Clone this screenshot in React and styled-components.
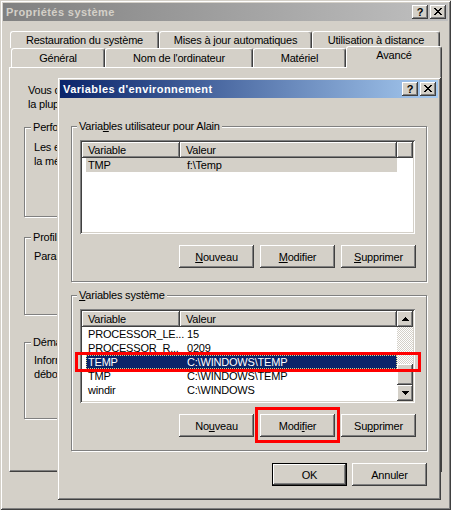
import React from 'react'
import styled, { createGlobalStyle, css } from 'styled-components'

const GlobalStyle = createGlobalStyle`
  html, body {
    margin: 0;
    padding: 0;
    background: #d4d0c8;
  }
  body {
    font-family: "Liberation Sans", Arial, sans-serif;
    font-size: 11px;
    letter-spacing: -0.2px;
    color: #000;
  }
`

const raised = css`
  box-shadow: inset -1px -1px #404040, inset 1px 1px #fff, inset -2px -2px #808080, inset 2px 2px #d4d0c8;
`

const frame = css`
  box-sizing: border-box;
  padding: 3px;
  background: #d4d0c8;
  box-shadow: inset 1px 1px #d4d0c8, inset -1px -1px #404040, inset 2px 2px #fff, inset -2px -2px #808080;
  display: flex;
  flex-direction: column;
`

const Window = styled.div`
  ${frame}
  position: relative;
  width: 451px;
  height: 510px;
`

const Dialog = styled.div`
  ${frame}
  position: absolute;
  left: 57px;
  top: 77px;
  width: 384px;
  height: 423px;
  z-index: 10;
`

const TitleBar = styled.div`
  flex: none;
  display: flex;
  align-items: center;
  height: 18px;
  padding: 0 2px 0 3px;
  font-weight: bold;
  letter-spacing: 0.4px;
  background: ${p => (p.$active
    ? 'linear-gradient(to right, #0a246a, #a6caf0)'
    : 'linear-gradient(to right, #808080, #c0c0c0)')};
  color: ${p => (p.$active ? '#fff' : '#d4d0c8')};
`

const TitleText = styled.span`
  flex: 1;
  white-space: nowrap;
`

const CaptionButtons = styled.div`
  display: flex;
  gap: 2px;
`

const CaptionButton = styled.div`
  width: 16px;
  height: 14px;
  box-sizing: border-box;
  background: #d4d0c8;
  ${raised}
  display: flex;
  align-items: center;
  justify-content: center;
  color: #000;
  font-weight: bold;
  font-size: 11px;
  letter-spacing: 0;
  line-height: 14px;
  padding-bottom: 1px;
`

const Body = styled.div`
  padding: 10px 6px 0;
  display: flex;
  flex-direction: column;
`

const TabRow = styled.div`
  display: flex;
  align-items: flex-end;
  height: ${p => p.$h}px;
  padding-left: ${p => p.$indent}px;
`

const Tab = styled.div`
  box-sizing: border-box;
  width: ${p => p.$w}px;
  height: 100%;
  background: #d4d0c8;
  border-top: 1px solid #fff;
  border-left: 1px solid #fff;
  border-right: 1px solid #404040;
  border-radius: 3px 3px 0 0;
  box-shadow: inset -1px 0 #808080;
  display: flex;
  align-items: center;
  justify-content: center;
  white-space: nowrap;
  ${p => p.$selected && css`
    position: relative;
    z-index: 1;
    height: 22px;
    margin-bottom: -1px;
    padding-bottom: 5px;
  `}
`

const Panel = styled.div`
  flex: none;
  height: 405px;
  box-sizing: border-box;
  border-top: 1px solid #fff;
  border-left: 1px solid #fff;
  border-right: 1px solid #404040;
  border-bottom: 1px solid #404040;
  box-shadow: inset -1px -1px #808080;
  padding: 15px 14px 0;
  display: flex;
  flex-direction: column;
`

const Text = styled.p`
  margin: ${p => p.$mt ?? 0}px 0 0 ${p => p.$ml ?? 0}px;
  line-height: 14px;
  white-space: nowrap;
`

const Group = styled.div`
  flex: none;
  box-sizing: border-box;
  height: ${p => p.$h}px;
  margin-top: ${p => p.$mt}px;
  padding: 0 ${p => p.$pr}px 0 ${p => p.$pl}px;
  border: 1px solid #808080;
  box-shadow: inset 1px 1px #fff, 1px 1px #fff;
  display: flex;
  flex-direction: column;
`

const Legend = styled.div`
  align-self: flex-start;
  margin: -7px 0 0 -3px;
  padding: 0 2px;
  line-height: 13px;
  background: #d4d0c8;
  white-space: nowrap;
  position: relative;
`

const ListView = styled.div`
  flex: none;
  box-sizing: border-box;
  width: 335px;
  height: 94px;
  margin-top: 7px;
  padding: 2px;
  background: #fff;
  box-shadow: inset 1px 1px #808080, inset -1px -1px #fff, inset 2px 2px #404040, inset -2px -2px #d4d0c8;
  display: flex;
`

const ListContent = styled.div`
  flex: 1;
  display: flex;
  flex-direction: column;
`

const Header = styled.div`
  display: flex;
  height: 16px;
  flex: none;
`

const HeaderCell = styled.div`
  box-sizing: border-box;
  width: ${p => (p.$w ? `${p.$w}px` : 'auto')};
  flex: ${p => (p.$w ? 'none' : 1)};
  padding-left: 6px;
  line-height: 16px;
  background: #d4d0c8;
  ${raised}
  white-space: nowrap;
`

const Row = styled.div`
  position: relative;
  display: flex;
  width: 311px;
  height: 14px;
  margin-left: 4px;
  line-height: 14px;
  white-space: nowrap;
  ${p => p.$selected === 'inactive' && css`
    background: #d4d0c8;
  `}
  ${p => p.$selected === 'active' && css`
    background: #0a246a;
    color: #fff;
    outline: 1px dotted #d8d48c;
    outline-offset: -1px;
  `}
  ${p => p.$marked && css`
    &::after {
      content: '';
      position: absolute;
      left: -11px;
      right: -24px;
      top: -3px;
      bottom: -3px;
      border: 3px solid #f00;
      z-index: 3;
      pointer-events: none;
    }
  `}
`

const Cell = styled.div`
  flex: none;
  box-sizing: border-box;
  width: ${p => p.$w}px;
  padding-left: ${p => p.$pl}px;
  white-space: nowrap;
`

const ScrollBar = styled.div`
  flex: none;
  width: 16px;
  display: flex;
  flex-direction: column;
`

const ScrollButton = styled.div`
  flex: none;
  height: 16px;
  background: #d4d0c8;
  ${raised}
  display: flex;
  align-items: center;
  justify-content: center;
`

const Track = styled.div`
  flex: 1;
  background: repeating-conic-gradient(#fff 0% 25%, #d4d0c8 0% 50%) 0 0 / 2px 2px;
`

const Thumb = styled.div`
  flex: none;
  height: 21px;
  background: #d4d0c8;
  ${raised}
`

const ButtonRow = styled.div`
  display: flex;
  justify-content: flex-end;
  gap: ${p => p.$gap}px;
  margin-top: ${p => p.$mt}px;
`

const Button = styled.button`
  position: relative;
  box-sizing: border-box;
  width: 75px;
  height: 23px;
  padding: 0;
  font: inherit;
  letter-spacing: inherit;
  color: #000;
  background: #d4d0c8;
  border: ${p => (p.$default ? '1px solid #000' : 'none')};
  ${raised}
  ${p => p.$marked && css`
    &::after {
      content: '';
      position: absolute;
      left: -5px;
      right: -5px;
      top: -7px;
      bottom: -6px;
      border: 3px solid #f00;
      pointer-events: none;
    }
  `}
`

const DialogBody = styled.div`
  padding: 0 11px;
  display: flex;
  flex-direction: column;
`

const CloseGlyph = () => (
  <svg width="8" height="7" viewBox="0 0 8 7" shapeRendering="crispEdges">
    <path
      fill="#000"
      d="M0 0h2v1H0z M6 0h2v1H6z M1 1h2v1H1z M5 1h2v1H5z M2 2h4v1H2z M3 3h2v1H3z M2 4h4v1H2z M1 5h2v1H1z M5 5h2v1H5z M0 6h2v1H0z M6 6h2v1H6z"
    />
  </svg>
)

const Arrow = ({ down }) => (
  <svg width="7" height="4" viewBox="0 0 7 4" shapeRendering="crispEdges">
    <path
      fill="#000"
      d={down
        ? 'M0 0h7v1H0z M1 1h5v1H1z M2 2h3v1H2z M3 3h1v1H3z'
        : 'M3 0h1v1H3z M2 1h3v1H2z M1 2h5v1H1z M0 3h7v1H0z'}
    />
  </svg>
)

const Caption = ({ title, active }) => (
  <TitleBar $active={active}>
    <TitleText>{title}</TitleText>
    <CaptionButtons>
      <CaptionButton>?</CaptionButton>
      <CaptionButton><CloseGlyph /></CaptionButton>
    </CaptionButtons>
  </TitleBar>
)

const userVars = [
  { name: 'TMP', value: 'f:\\Temp', selected: 'inactive' },
]

const systemVars = [
  { name: 'PROCESSOR_LE...', value: '15' },
  { name: 'PROCESSOR_R...', value: '0209' },
  { name: 'TEMP', value: 'C:\\WINDOWS\\TEMP', selected: 'active', marked: true },
  { name: 'TMP', value: 'C:\\WINDOWS\\TEMP' },
  { name: 'windir', value: 'C:\\WINDOWS' },
]

const VarList = ({ rows, scroll }) => (
  <ListView>
    <ListContent>
      <Header>
        <HeaderCell $w={98}>Variable</HeaderCell>
        <HeaderCell $w={217}>Valeur</HeaderCell>
        {!scroll && <HeaderCell />}
      </Header>
      {rows.map(r => (
        <Row key={r.name + r.value} $selected={r.selected} $marked={r.marked}>
          <Cell $w={94} $pl={2}>{r.name}</Cell>
          <Cell $w={217} $pl={7}>{r.value}</Cell>
        </Row>
      ))}
    </ListContent>
    {scroll && (
      <ScrollBar>
        <ScrollButton><Arrow /></ScrollButton>
        <Track />
        <Thumb />
        <ScrollButton><Arrow down /></ScrollButton>
      </ScrollBar>
    )}
  </ListView>
)

export default function App() {
  return (
    <>
      <GlobalStyle />
      <Window>
        <Caption title="Propriétés système" />
        <Body>
          <TabRow $h={17} $indent={1}>
            <Tab $w={149}>Restauration du système</Tab>
            <Tab $w={153}>Mises à jour automatiques</Tab>
            <Tab $w={128}>Utilisation à distance</Tab>
          </TabRow>
          <TabRow $h={19} $indent={2}>
            <Tab $w={94}>Général</Tab>
            <Tab $w={148}>Nom de l'ordinateur</Tab>
            <Tab $w={93}>Matériel</Tab>
            <Tab $w={96} $selected>Avancé</Tab>
          </TabRow>
          <Panel>
            <Text $ml={4}>
              Vous devez ouvrir une session en tant qu'administrateur afin d'effectuer<br />
              la plupart de ces modifications.
            </Text>
            <Group $h={90} $mt={16} $pl={9} $pr={10}>
              <Legend>Performances</Legend>
              <Text $mt={6}>
                Les effets visuels, la planification du processeur, l'utilisation de<br />
                la mémoire et la mémoire virtuelle
              </Text>
            </Group>
            <Group $h={78} $mt={20} $pl={9} $pr={10}>
              <Legend>Profils des utilisateurs</Legend>
              <Text $mt={5}>Paramètres du Bureau liés à votre ouverture de session</Text>
            </Group>
            <Group $h={77} $mt={27} $pl={9} $pr={10}>
              <Legend>Démarrage et récupération</Legend>
              <Text $mt={4}>
                Informations de démarrage du système, de défaillance du système et de<br />
                débogage
              </Text>
            </Group>
          </Panel>
        </Body>

        <Dialog>
          <Caption title="Variables d'environnement" active />
          <DialogBody>
            <Group $h={156} $mt={28} $pl={8} $pr={10}>
              <Legend>Varia<u>b</u>les utilisateur pour Alain</Legend>
              <VarList rows={userVars} />
              <ButtonRow $gap={6} $mt={11}>
                <Button><u>N</u>ouveau</Button>
                <Button><u>M</u>odifier</Button>
                <Button><u>S</u>upprimer</Button>
              </ButtonRow>
            </Group>
            <Group $h={156} $mt={13} $pl={8} $pr={10}>
              <Legend><u>V</u>ariables système</Legend>
              <VarList rows={systemVars} scroll />
              <ButtonRow $gap={6} $mt={11}>
                <Button>No<u>u</u>veau</Button>
                <Button $marked>Modi<u>f</u>ier</Button>
                <Button>Su<u>p</u>primer</Button>
              </ButtonRow>
            </Group>
            <ButtonRow $gap={5} $mt={12}>
              <Button $default>OK</Button>
              <Button>Annuler</Button>
            </ButtonRow>
          </DialogBody>
        </Dialog>
      </Window>
    </>
  )
}
